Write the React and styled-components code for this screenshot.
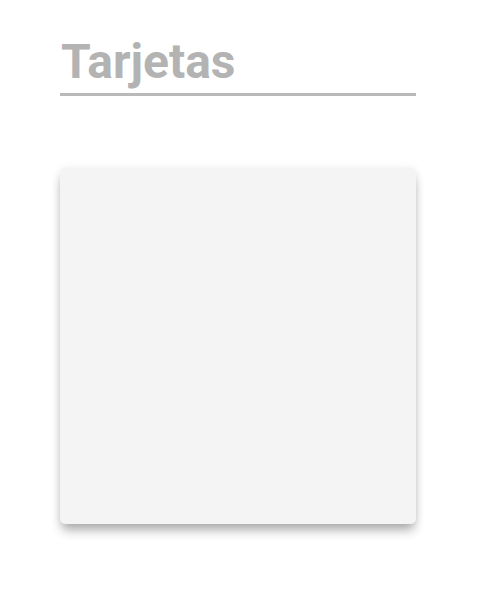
import React from "react";
import styled, { createGlobalStyle } from "styled-components";

const Global = createGlobalStyle`
  html, body { margin: 0; padding: 0; background: #ffffff; }
  body { font-family: Roboto, "Liberation Sans", sans-serif; min-height: 613px; }
`;

const Page = styled.main`
  width: 356px;
  margin-left: 60px;
  padding: 34px 0 60px;
`;

const Title = styled.h1`
  margin: 0;
  font-family: Roboto, "Liberation Sans", sans-serif;
  font-weight: 700;
  font-size: 48px;
  line-height: 56px;
  color: #b3b3b3;
  padding-left: 1px;
  border-bottom: 3px solid #b9b9b9;
  padding-bottom: 3px;
`;

const Card = styled.section`
  margin-top: 72px;
  height: 356px;
  background: #f4f4f4;
  border-radius: 5px;
  box-shadow: 0 8px 11px -2px rgba(0, 0, 0, 0.32), 0 0 8px rgba(0, 0, 0, 0.07);
`;

export default function App() {
  return (
    <>
      <Global />
      <Page>
        <Title>Tarjetas</Title>
        <Card />
      </Page>
    </>
  );
}
